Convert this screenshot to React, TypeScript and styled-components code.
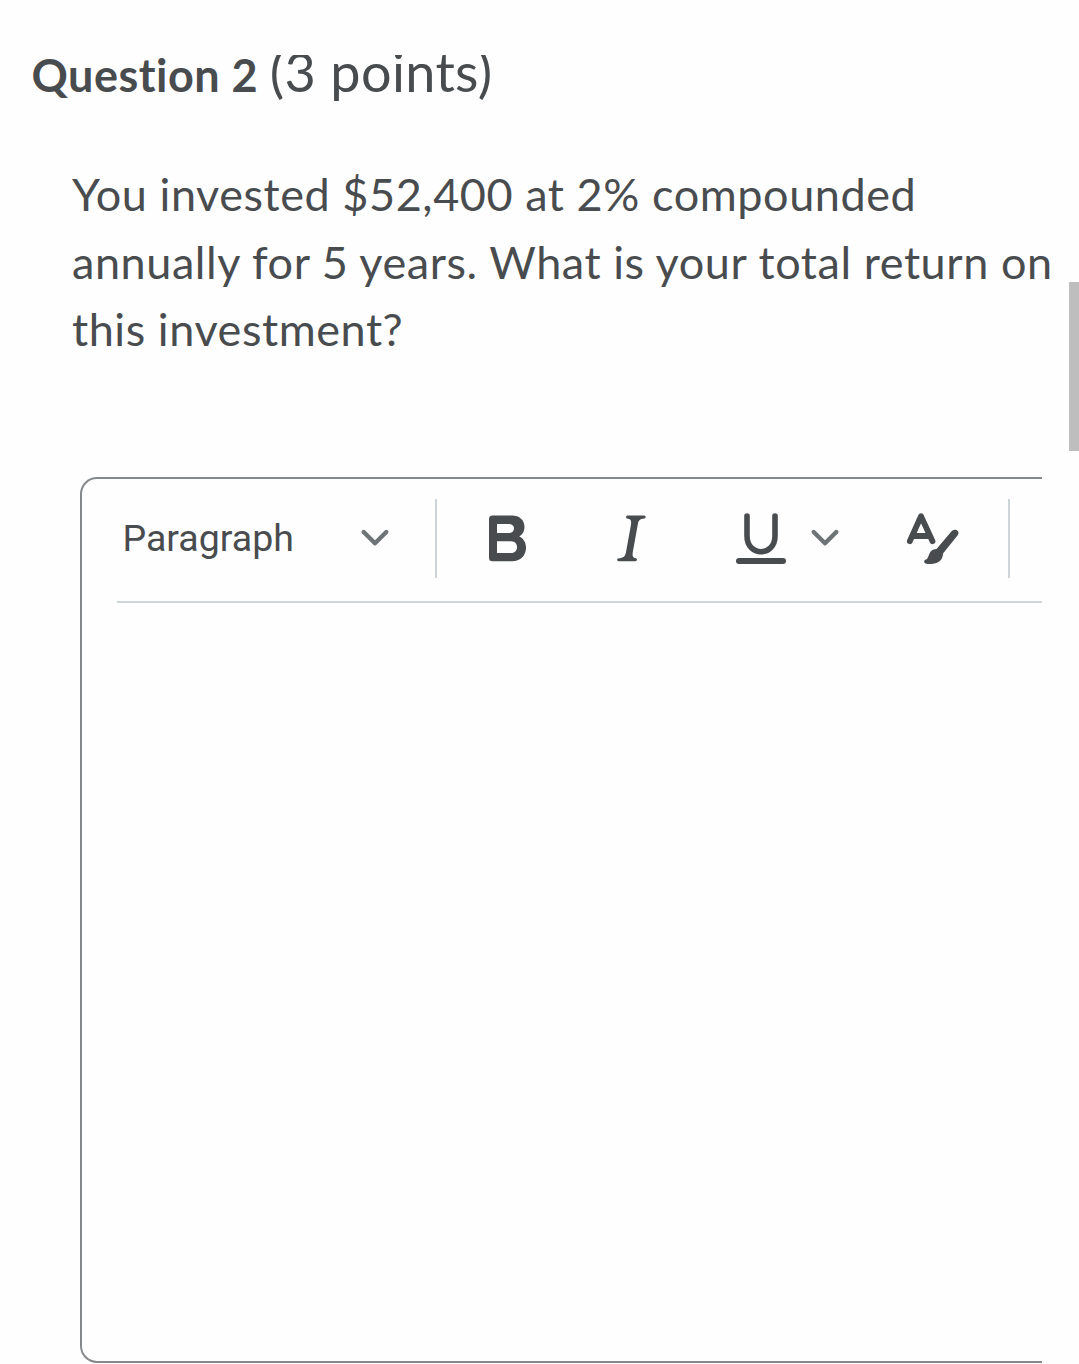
import React from "react";
import styled, { createGlobalStyle } from "styled-components";

const ink = "#494c4e";
const muted = "#6e7376";
const rule = "#cdd5d8";

const GlobalStyle = createGlobalStyle`
  * { box-sizing: border-box; }
  html, body { margin: 0; padding: 0; background: #fefefe; overflow: hidden; }
`;

const Page = styled.main`
  position: relative;
  width: 1079px;
  height: 1364px;
  padding-top: 36px;
  overflow: hidden;
  color: ${ink};
  font-family: Lato, "Liberation Sans", sans-serif;
`;

const Heading = styled.h2`
  display: flex;
  align-items: baseline;
  height: 76px;
  margin: 0;
  padding-left: 31.5px;
  font-size: 45px;
  line-height: 72px;
  white-space: nowrap;
`;

const Title = styled.span`
  font-weight: 700;
  letter-spacing: 0.5px;
`;

const Points = styled.span`
  margin-left: 11.5px;
  font-size: 54px;
  font-weight: 400;
  letter-spacing: 0.36px;
  clip-path: inset(19px -10px 0 -10px);
`;

const Prompt = styled.p`
  margin: 49px 0 0 72px;
  font-size: 45px;
  line-height: 67.5px;
  letter-spacing: 0.563px;
  white-space: nowrap;
`;

const Editor = styled.section`
  width: 962px;
  height: 886px;
  margin: 113px 0 0 80px;
  border: 2px solid #86898b;
  border-right: 0;
  border-radius: 17px 0 0 17px;
`;

const Toolbar = styled.div`
  display: flex;
  align-items: center;
  height: 124px;
  margin-left: 35px;
  padding-bottom: 3px;
  border-bottom: 2px solid ${rule};
`;

const FormatSelect = styled.button`
  display: flex;
  align-items: center;
  justify-content: space-between;
  width: 318px;
  height: 78px;
  padding: 0 46px 0 5.5px;
  border: 0;
  background: none;
  color: ${ink};
  font: 400 37.5px Roboto, sans-serif;
`;

const Divider = styled.span<{ $gap?: number }>`
  width: 2px;
  height: 79px;
  margin-left: ${(p) => p.$gap ?? 0}px;
  background: ${rule};
`;

const Tool = styled.button<{ $width: number; $gap: number }>`
  display: flex;
  flex: none;
  align-items: center;
  width: ${(p) => p.$width}px;
  height: 60px;
  margin-left: ${(p) => p.$gap}px;
  padding: 0;
  border: 0;
  background: none;
  color: ${ink};
`;

const Glyph = styled.svg`
  display: block;
  flex: none;
  overflow: visible;
`;

const Thumb = styled.div`
  position: absolute;
  top: 282px;
  right: 0;
  width: 10px;
  height: 169px;
  background: #bebebe;
`;

const Chevron = () => (
  <Glyph width="28" height="18" viewBox="0 0 28 18" fill="none" stroke={muted} strokeWidth="4.400" strokeLinecap="round" strokeLinejoin="round">
    <path d="M2.700 3 14 14.300 25.300 3" />
  </Glyph>
);

const BoldIcon = () => (
  <Glyph width="38" height="60" viewBox="0 0 38 60" fill="currentColor" fillRule="evenodd">
    <path d="M4.500 7.500H24C31.500 7.500 36.500 12 36.500 19C36.500 23.500 34.500 26.500 31.300 28.500C35.500 30.500 38 34.500 38 39.500C38 47.500 32.500 53.300 24 53.300H4.500Q1 53.300 1 49.800V11Q1 7.500 4.500 7.500ZM9 16V25H21.500C27.500 25 27.500 16 21.500 16ZM9 33.300V45H23C31 45 31 33.300 23 33.300Z" />
  </Glyph>
);

const ItalicIcon = () => (
  <Glyph width="29" height="60" viewBox="0 0 29 60" fill="currentColor">
    <path d="M10.500 7.500H27.500C29.200 8 29 10.200 27.500 10.500C22.500 11 21.500 12.500 20.800 16.500L15.800 44C15.200 48 16 50 19 50.300C20.500 50.700 20.300 53 18.500 53.300H1.500C-.5 52.700 0 50.500 1.500 50.300C6.500 50 8.200 48.500 9 44L14 16.500C14.700 12.500 13.500 10.700 10 10.500C8.500 10 8.800 8 10.500 7.500Z" />
  </Glyph>
);

const UnderlineIcon = () => (
  <Glyph width="50" height="60" viewBox="0 0 50 60" fill="none" stroke="currentColor" strokeLinecap="round">
    <path strokeWidth="5.600" d="M11 8V28C11 49 39 49 39 28V8" />
    <path strokeWidth="6" d="M3 53H47" />
  </Glyph>
);

const FormatPainterIcon = () => (
  <Glyph width="52" height="60" viewBox="0 0 52 60">
    <path d="M2.800 33.200 14 8.200 25.500 33.200M6.500 28H22.500" fill="none" stroke="currentColor" strokeWidth="5.800" strokeLinecap="round" strokeLinejoin="round" />
    <path d="M45 22.800C49 20 53.500 23.500 50.500 27.500L36 45.500C36 53.500 28.500 57.500 18.500 55.500C16.500 54.500 17 51.800 19 51.500C23 50 20.500 41.500 29.500 41Z" fill="currentColor" />
  </Glyph>
);

export default function App() {
  return (
    <Page>
      <GlobalStyle />
      <Heading>
        <Title>Question 2</Title>
        <Points>(3 points)</Points>
      </Heading>
      <Prompt>
        You invested $52,400 at 2% compounded
        <br />
        annually for 5 years. What is your total return on
        <br />
        this investment?
      </Prompt>
      <Editor>
        <Toolbar>
          <FormatSelect>
            Paragraph
            <Chevron />
          </FormatSelect>
          <Divider />
          <Tool $width={38} $gap={51} aria-label="Bold"><BoldIcon /></Tool>
          <Tool $width={29} $gap={91} aria-label="Italic"><ItalicIcon /></Tool>
          <Tool $width={50} $gap={90} aria-label="Underline"><UnderlineIcon /></Tool>
          <Tool $width={28} $gap={25} aria-label="More text styles"><Chevron /></Tool>
          <Tool $width={52} $gap={68} aria-label="Format painter"><FormatPainterIcon /></Tool>
          <Divider $gap={49} />
        </Toolbar>
      </Editor>
      <Thumb />
    </Page>
  );
}
